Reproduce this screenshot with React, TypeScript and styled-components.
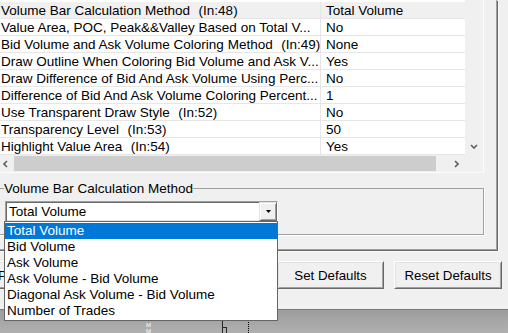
import * as React from 'react';
import styled, {createGlobalStyle} from 'styled-components';

const GlobalStyle = createGlobalStyle`
    html, body {
        margin: 0;
        padding: 0;
        background: #f0f0f0;
        overflow: hidden;
    }
    body {
        font-family: "Liberation Sans", Arial, sans-serif;
        font-size: 13.5px;
        color: #000;
    }
`;

const Screen = styled.div`
    width: 508px;
    height: 333px;
    overflow: hidden;
    display: flex;
    flex-direction: column;
    background: #f0f0f0;
`;

const Dialog = styled.div`
    display: flex;
    flex-direction: column;
    padding-bottom: 20px;
    border-bottom: 1px solid #7a7a7a;
`;

const Panel = styled.div`
    box-sizing: border-box;
    width: 500px;
    margin-left: -3px;
    padding: 0 12px 14px 0;
    border-right: 1px solid #a0a0a0;
    border-bottom: 1px solid #a0a0a0;
    box-shadow: 1px 1px 0 #696969, 2px 2px 0 #fafafa;
`;

const Grid = styled.div`
    display: flex;
    flex-direction: column;
    border-right: 1px solid #fcfcfc;
    border-bottom: 1px solid #fcfcfc;
`;

const GridMain = styled.div`
    display: flex;
    height: 155px;
`;

const Rows = styled.div`
    flex: 1;
    background: #fff;
    padding-top: 2px;
    overflow: hidden;
`;

const Row = styled.div<{ $selected?: boolean }>`
    display: flex;
    height: 16px;
    line-height: 17px;
    border-bottom: 1px solid #e6e6e6;
    background: ${p => (p.$selected ? '#f0f0f0' : '#fff')};
    white-space: pre;
`;

const NameCell = styled.div`
    box-sizing: border-box;
    width: 324px;
    padding-left: 4px;
    border-right: 1px solid #e6e6e6;
    overflow: hidden;
`;

const Hint = styled.span`
    margin-left: 1px;
`;

const ValueCell = styled.div`
    flex: 1;
    padding-left: 5px;
`;

const VScroll = styled.div`
    width: 18px;
    display: flex;
    flex-direction: column;
    justify-content: flex-end;
    background: #f0f0f0;
`;

const HScroll = styled.div`
    display: flex;
    height: 17px;
    background: #f0f0f0;
`;

const ArrowButton = styled.div`
    width: 17px;
    height: 17px;
    flex: none;
    display: flex;
    align-items: center;
    justify-content: center;
`;

const Track = styled.div`
    flex: 1;
    display: flex;
    align-items: center;
`;

const Thumb = styled.div`
    width: 422px;
    height: 15px;
    background: #cdcdcd;
`;

const Corner = styled.div`
    width: 18px;
    flex: none;
    background: #f0f0f0;
`;

const GroupBox = styled.fieldset`
    margin: 8px 0 0 0;
    min-width: 0;
    padding: 5px 0 12px 6px;
    border: 1px solid #a0a0a0;
    box-shadow: 1px 1px 0 #fff;
`;

const GroupLabel = styled.legend`
    padding: 0;
    line-height: 15px;
`;

const Combo = styled.div`
    position: relative;
    box-sizing: border-box;
    width: 273px;
    height: 21px;
    margin-left: 1px;
    display: flex;
    background: #fff;
    border-top: 1px solid #a0a0a0;
    border-left: 1px solid #a0a0a0;
    border-bottom: 1px solid #fff;
    border-right: 1px solid #fff;
    box-shadow: inset 1px 1px 0 #696969, inset -1px -1px 0 #e3e3e3;
`;

const ComboText = styled.div`
    flex: 1;
    padding: 1px 0 0 3px;
    line-height: 17px;
`;

const ComboButton = styled.div`
    box-sizing: border-box;
    width: 18px;
    height: 19px;
    display: flex;
    align-items: center;
    justify-content: center;
    background: #f0f0f0;
    border-top: 1px solid #e3e3e3;
    border-left: 1px solid #e3e3e3;
    border-right: 1px solid #696969;
    border-bottom: 1px solid #696969;
    box-shadow: inset 1px 1px 0 #fff, inset -1px -1px 0 #a0a0a0;
`;

const DropList = styled.div`
    position: absolute;
    top: 100%;
    left: -2px;
    right: -1px;
    z-index: 10;
    padding: 1px 0;
    background: #fff;
    border: 1px solid #646464;
`;

const DropItem = styled.div<{ $active?: boolean }>`
    height: 16px;
    line-height: 16px;
    padding-left: 2px;
    white-space: nowrap;
    background: ${p => (p.$active ? '#0078d7' : '#fff')};
    color: ${p => (p.$active ? '#fff' : '#000')};
`;

const ButtonRow = styled.div`
    display: flex;
    gap: 10px;
    height: 28px;
    margin-top: 11px;
`;

const Button = styled.button<{ $width: number; $left?: boolean }>`
    box-sizing: border-box;
    width: ${p => p.$width}px;
    height: 28px;
    padding: ${p => (p.$left ? '0 0 0 57px' : '0')};
    display: flex;
    align-items: center;
    justify-content: ${p => (p.$left ? 'flex-start' : 'center')};
    font-family: "Liberation Sans", Arial, sans-serif;
    font-size: 13.3px;
    color: #000;
    background: #f0f0f0;
    border-top: 1px solid #fff;
    border-left: 1px solid #fff;
    border-right: 1px solid #696969;
    border-bottom: 1px solid #696969;
    box-shadow: inset 1px 1px 0 #e3e3e3, inset -1px -1px 0 #a0a0a0;
`;

const ChartStrip = styled.div`
    flex: 1;
    background: linear-gradient(#9d9d9d, #b3b3b3);
`;

const Chevron = ({dir}: { dir: 'left' | 'right' | 'down' }) => {
    const pts = {
        left: '4,1 1,4 4,7',
        right: '1,1 4,4 1,7',
        down: '1,1 4,4 7,1',
    }[dir];
    const w = dir === 'down' ? 8 : 5;
    const h = dir === 'down' ? 5 : 8;
    return (
        <svg width={w} height={h} viewBox={`0 0 ${w} ${h}`}>
            <polyline points={pts} fill="none" stroke="#606060" strokeWidth="1.6"/>
        </svg>
    );
};

const rows: [string, string | null, string][] = [
    ['Volume Bar Calculation Method', '(In:48)', 'Total Volume'],
    ['Value Area, POC, Peak&&Valley Based on Total V...', null, 'No'],
    ['Bid Volume and Ask Volume Coloring Method', '(In:49)', 'None'],
    ['Draw Outline When Coloring Bid Volume and Ask V...', null, 'Yes'],
    ['Draw Difference of Bid And Ask Volume Using Perc...', null, 'No'],
    ['Difference of Bid And Ask Volume Coloring Percent...', null, '1'],
    ['Use Transparent Draw Style', '(In:52)', 'No'],
    ['Transparency Level', '(In:53)', '50'],
    ['Highlight Value Area', '(In:54)', 'Yes'],
];

const options = [
    'Total Volume',
    'Bid Volume',
    'Ask Volume',
    'Ask Volume - Bid Volume',
    'Diagonal Ask Volume - Bid Volume',
    'Number of Trades',
];

const App = () => {
    return (
        <Screen>
            <GlobalStyle/>
            <Dialog>
                <Panel>
                    <Grid>
                        <GridMain>
                            <Rows>
                                {rows.map(([name, hint, value], i) => (
                                    <Row key={name} $selected={i === 0}>
                                        <NameCell>
                                            {name}
                                            {hint && <Hint>{'  ' + hint}</Hint>}
                                        </NameCell>
                                        <ValueCell>{value}</ValueCell>
                                    </Row>
                                ))}
                            </Rows>
                            <VScroll>
                                <ArrowButton><Chevron dir="down"/></ArrowButton>
                            </VScroll>
                        </GridMain>
                        <HScroll>
                            <ArrowButton><Chevron dir="left"/></ArrowButton>
                            <Track><Thumb/></Track>
                            <ArrowButton><Chevron dir="right"/></ArrowButton>
                            <Corner/>
                        </HScroll>
                    </Grid>
                    <GroupBox>
                        <GroupLabel>Volume Bar Calculation Method</GroupLabel>
                        <Combo>
                            <ComboText>Total Volume</ComboText>
                            <ComboButton>
                                <svg width="5" height="3" viewBox="0 0 5 3">
                                    <polygon points="0,0 5,0 2.5,3" fill="#000"/>
                                </svg>
                            </ComboButton>
                            <DropList>
                                {options.map((o, i) => (
                                    <DropItem key={o} $active={i === 0}>{o}</DropItem>
                                ))}
                            </DropList>
                        </Combo>
                    </GroupBox>
                </Panel>
                <ButtonRow>
                    <Button $width={327} $left style={{marginLeft: -60}}>P</Button>
                    <Button $width={107}>Set Defaults</Button>
                    <Button $width={108}>Reset Defaults</Button>
                </ButtonRow>
            </Dialog>
            <ChartStrip>
                <svg width="508" height="24" viewBox="0 0 508 24">
                    <line x1="222.5" y1="0" x2="222.5" y2="24" stroke="#2a2a2a"/>
                    <rect x="222.5" y="17.5" width="4" height="8" fill="none" stroke="#2a2a2a"/>
                    <line x1="248.5" y1="0" x2="248.5" y2="24" stroke="#000" strokeDasharray="1 1"/>
                    <text x="146" y="17" fontSize="6" fill="#fff" fontFamily="Liberation Sans">M</text>
                    <text x="146" y="23" fontSize="6" fill="#fff" fontFamily="Liberation Sans">M</text>
                </svg>
            </ChartStrip>
        </Screen>
    );
};

export default App;
